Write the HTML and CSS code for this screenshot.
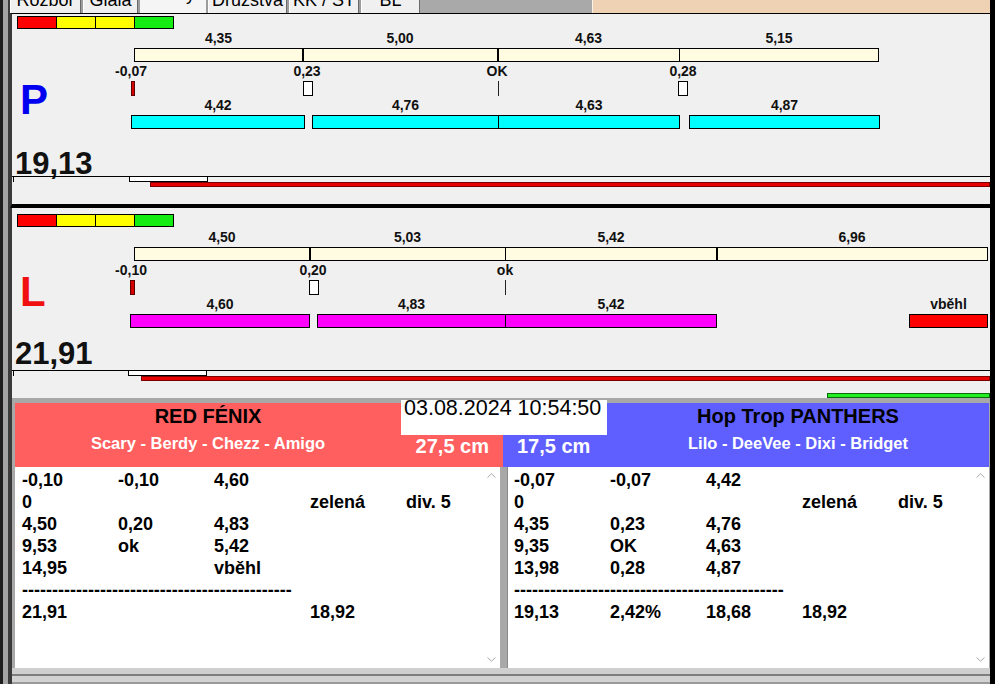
FILE: index.html
```html
<!DOCTYPE html>
<html lang="cs">
<head>
<meta charset="utf-8">
<title>Grafy</title>
<link rel="stylesheet" href="styles.css">
</head>
<body>
<div class="strip"></div>
<div class="main">
  <div class="tabs">
    <div class="tab t1"><span>Rozbor</span></div>
    <div class="tab t2"><span>Glala</span></div>
    <div class="tab t3 sel"><span>Grafy</span></div>
    <div class="tab t4"><span>Družstva</span></div>
    <div class="tab t5"><span>KK / ST</span></div>
    <div class="tab t6"><span>BL</span></div>
    <div class="tabs-fill"></div>
    <div class="tabs-peach"></div>
  </div>

  <div class="chart p">
    <div class="colorbar"><i class="cb r"></i><i class="cb y"></i><i class="cb y"></i><i class="cb g"></i></div>
    <div class="body">
      <div class="side"><div class="letter">P</div></div>
      <div class="plot">
        <div class="prow lr">
          <span class="lab" style="left:21px;width:169px">4,35</span>
          <span class="lab" style="left:189px;width:196px">5,00</span>
          <span class="lab" style="left:384px;width:183px">4,63</span>
          <span class="lab" style="left:566px;width:200px">5,15</span>
        </div>
        <div class="prow br">
          <span class="seg cream" style="left:21px;width:169px"></span>
          <span class="seg cream thick" style="left:189px;width:196px"></span>
          <span class="seg cream thick" style="left:384px;width:183px"></span>
          <span class="seg cream" style="left:566px;width:200px"></span>
        </div>
        <div class="prow lr">
          <span class="lab c" style="left:18px">-0,07</span>
          <span class="lab c" style="left:194px">0,23</span>
          <span class="lab c" style="left:384px">OK</span>
          <span class="lab c" style="left:570px">0,28</span>
        </div>
        <div class="prow mr">
          <span class="mk mred" style="left:18px;width:4px"></span>
          <span class="mk mbox" style="left:190px;width:10px"></span>
          <span class="mk mline" style="left:385px;width:1px"></span>
          <span class="mk mbox" style="left:565px;width:10px"></span>
        </div>
        <div class="prow lr">
          <span class="lab" style="left:18px;width:174px">4,42</span>
          <span class="lab" style="left:199px;width:187px">4,76</span>
          <span class="lab" style="left:385px;width:182px">4,63</span>
          <span class="lab" style="left:576px;width:191px">4,87</span>
        </div>
        <div class="prow br">
          <span class="seg cyan" style="left:18px;width:174px"></span>
          <span class="seg cyan" style="left:199px;width:187px"></span>
          <span class="seg cyan" style="left:385px;width:182px"></span>
          <span class="seg cyan" style="left:576px;width:191px"></span>
        </div>
      </div>
    </div>
    <div class="total">19,13</div>
    <div class="axis">
      <span class="tick"></span>
      <div class="abox" style="margin-left:117px"></div>
      <div class="abar" style="margin-left:138px"></div>
    </div>
  </div>

  <div class="chart l">
    <div class="colorbar"><i class="cb r"></i><i class="cb y"></i><i class="cb y"></i><i class="cb g"></i></div>
    <div class="body">
      <div class="side"><div class="letter">L</div></div>
      <div class="plot">
        <div class="prow lr">
          <span class="lab" style="left:21px;width:176px">4,50</span>
          <span class="lab" style="left:196px;width:197px">5,03</span>
          <span class="lab" style="left:392px;width:212px">5,42</span>
          <span class="lab" style="left:603px;width:272px">6,96</span>
        </div>
        <div class="prow br">
          <span class="seg cream" style="left:21px;width:176px"></span>
          <span class="seg cream thick" style="left:196px;width:197px"></span>
          <span class="seg cream" style="left:392px;width:212px"></span>
          <span class="seg cream thick" style="left:603px;width:272px"></span>
        </div>
        <div class="prow lr">
          <span class="lab c" style="left:18px">-0,10</span>
          <span class="lab c" style="left:200px">0,20</span>
          <span class="lab c" style="left:392px">ok</span>
        </div>
        <div class="prow mr">
          <span class="mk mred" style="left:17px;width:5px"></span>
          <span class="mk mbox" style="left:196px;width:10px"></span>
          <span class="mk mline" style="left:392px;width:1px"></span>
        </div>
        <div class="prow lr">
          <span class="lab" style="left:17px;width:180px">4,60</span>
          <span class="lab" style="left:204px;width:189px">4,83</span>
          <span class="lab" style="left:392px;width:212px">5,42</span>
          <span class="lab" style="left:796px;width:79px">vběhl</span>
        </div>
        <div class="prow br">
          <span class="seg mag" style="left:17px;width:180px"></span>
          <span class="seg mag" style="left:204px;width:189px"></span>
          <span class="seg mag" style="left:392px;width:212px"></span>
          <span class="seg red" style="left:796px;width:79px"></span>
        </div>
      </div>
    </div>
    <div class="total">21,91</div>
    <div class="axis">
      <span class="tick"></span>
      <div class="abox" style="margin-left:116px"></div>
      <div class="abar" style="margin-left:129px"></div>
      <div class="agreen" style="margin-left:815px"></div>
    </div>
  </div>

  <div class="bottom">
    <div class="teams">
      <div class="team a">
        <div class="hdr">
          <div class="hdr-main">
            <div class="title">RED FÉNIX</div>
            <div class="names">Scary - Berdy - Chezz - Amigo</div>
          </div>
          <div class="hdr-side">27,5 cm</div>
        </div>
        <div class="tbox">
          <div class="txt">
            <span>-0,10</span><span>-0,10</span><span>4,60</span><span></span><span></span>
            <span>0</span><span></span><span></span><span>zelená</span><span>div. 5</span>
            <span>4,50</span><span>0,20</span><span>4,83</span><span></span><span></span>
            <span>9,53</span><span>ok</span><span>5,42</span><span></span><span></span>
            <span>14,95</span><span></span><span>vběhl</span><span></span><span></span>
            <span class="dash">---------------------------------------------</span>
            <span>21,91</span><span></span><span></span><span>18,92</span><span></span>
          </div>
          <div class="scroll">
            <svg width="9" height="5" viewBox="0 0 9 5"><path d="M0.5 4.5 L4.5 0.8 L8.5 4.5" fill="none" stroke="#a8a8a8" stroke-width="1"/></svg>
            <svg width="9" height="5" viewBox="0 0 9 5"><path d="M0.5 0.5 L4.5 4.2 L8.5 0.5" fill="none" stroke="#a8a8a8" stroke-width="1"/></svg>
          </div>
        </div>
      </div>
      <div class="team b">
        <div class="hdr">
          <div class="hdr-side">17,5 cm</div>
          <div class="hdr-main">
            <div class="title">Hop Trop PANTHERS</div>
            <div class="names">Lilo - DeeVee - Dixi - Bridget</div>
          </div>
        </div>
        <div class="tbox">
          <div class="txt">
            <span>-0,07</span><span>-0,07</span><span>4,42</span><span></span><span></span>
            <span>0</span><span></span><span></span><span>zelená</span><span>div. 5</span>
            <span>4,35</span><span>0,23</span><span>4,76</span><span></span><span></span>
            <span>9,35</span><span>OK</span><span>4,63</span><span></span><span></span>
            <span>13,98</span><span>0,28</span><span>4,87</span><span></span><span></span>
            <span class="dash">---------------------------------------------</span>
            <span>19,13</span><span>2,42%</span><span>18,68</span><span>18,92</span><span></span>
          </div>
          <div class="scroll">
            <svg width="9" height="5" viewBox="0 0 9 5"><path d="M0.5 4.5 L4.5 0.8 L8.5 4.5" fill="none" stroke="#a8a8a8" stroke-width="1"/></svg>
            <svg width="9" height="5" viewBox="0 0 9 5"><path d="M0.5 0.5 L4.5 4.2 L8.5 0.5" fill="none" stroke="#a8a8a8" stroke-width="1"/></svg>
          </div>
        </div>
      </div>
    </div>
    <div class="foot"></div>
    <div class="date">03.08.2024 10:54:50</div>
  </div>
</div>
<div class="edge"></div>
</body>
</html>
```

FILE: styles.css
```css
* { box-sizing: border-box; margin: 0; padding: 0; }

body {
  width: 995px;
  height: 684px;
  overflow: hidden;
  display: flex;
  background: #f0f0f0;
  font-family: "Liberation Sans", Arial, sans-serif;
  color: #000;
}

.strip {
  width: 10px;
  background: linear-gradient(90deg, #1e1e1e 0 3px, #a4a4a4 3px 8px, #3c3c3c 8px 10px);
}

.main {
  width: 980px;
  display: flex;
  flex-direction: column;
}

.edge {
  width: 5px;
  background: #000;
}

/* tabs */
.tabs {
  height: 13px;
  display: flex;
  background: #9c9c9c;
}

.tab {
  height: 13px;
  overflow: hidden;
  margin-right: 2px;
  background: #f0f0f0;
  border-left: 1px solid #fff;
  border-right: 1px solid #6a6a6a;
  font-size: 18px;
  line-height: 18px;
  text-align: center;
  white-space: nowrap;
}

.tab span { display: block; margin-top: -9px; }
.tab.sel { background: #f5f5f5; border-color: #f5f5f5; }
.tab.sel span { margin-top: -15px; }

.t1 { width: 71px; }
.t2 { width: 55px; }
.t3 { width: 66px; }
.t4 { width: 79px; }
.t5 { width: 70px; }
.t6 { width: 59px; margin-right: 0; }

.tabs-fill { width: 172px; background: #a9a9a9; }
.tabs-peach { flex: 1; background: #efd2b4; border-left: 1px solid #fbf3ea; }

/* charts */
.chart {
  height: 190px;
  background: #f0f0f0;
  border-left: 2px solid #3a3a3a;
  display: flex;
  flex-direction: column;
}

.chart.p {
  height: 195px;
  border-top: 1px solid #000;
  border-bottom: 4px solid #000;
}

.colorbar {
  display: flex;
  gap: 1px;
  width: max-content;
  margin-left: 5px;
  background: #000;
  border: 1px solid #000;
}

.p .colorbar { margin-top: 2px; }
.l .colorbar { margin-top: 6px; }

.cb { display: block; width: 38px; height: 11px; }
.cb.r { background: #ff0000; }
.cb.y { background: #ffff00; }
.cb.g { background: #14ec14; }

.body { display: flex; height: 100px; }
.l .body { margin-top: 1px; }

.side { width: 101px; padding-left: 8px; }

.letter {
  font-size: 42px;
  font-weight: bold;
  line-height: 42px;
}

.p .letter { margin-top: 50px; color: #0000f0; }
.l .letter { margin-top: 43px; color: #f01010; }

.plot { flex: 1; }

.prow { position: relative; }
.prow.lr { height: 14px; margin-top: 2px; }
.prow.br { height: 14px; margin-top: 3px; }
.prow.mr { height: 15px; margin-top: 3px; }

.lab {
  position: absolute;
  top: 0;
  font-size: 14px;
  font-weight: bold;
  line-height: 14px;
  text-align: center;
  white-space: nowrap;
  color: #111;
}

.lab.c { transform: translateX(-50%); }

.seg {
  position: absolute;
  top: 0;
  height: 14px;
  border: 1px solid #000;
}

.seg.cream { background: #fffce2; }
.seg.thick { border-left-width: 2px; }
.seg.cyan { background: #00ffff; }
.seg.mag { background: #ff00ff; }
.seg.red { background: #ff0000; }

.mk { position: absolute; top: 0; height: 15px; }
.mk.mred { background: #d40000; border: 1px solid #5a0000; }
.mk.mbox { background: #fff; border: 1px solid #000; }
.mk.mline { background: #222; }

.total {
  height: 24px;
  padding-left: 3px;
  font-size: 31px;
  font-weight: bold;
  line-height: 24px;
  color: #111;
}

.p .total { margin-top: 23px; }
.l .total { margin-top: 14px; margin-bottom: 4px; }

.axis {
  flex: 1;
  position: relative;
  border-top: 1px solid #000;
}

.tick {
  position: absolute;
  left: 1px;
  top: 0;
  width: 1px;
  height: 5px;
  background: #000;
}

.abox {
  width: 79px;
  height: 5px;
  background: #fff;
  border: 1px solid #000;
  border-top: none;
}

.abar {
  height: 5px;
  background: #e60000;
  border: 1px solid #7a0000;
}

.agreen {
  margin-top: 12px;
  height: 5px;
  background: #22ee22;
  border: 1px solid #0b6a0b;
}

/* bottom section */
.bottom {
  position: relative;
  height: 286px;
  background: #a8a8a8;
  border-left: 2px solid #3a3a3a;
  padding: 5px 1px 0 3px;
  display: flex;
  flex-direction: column;
}

.teams { display: flex; height: 265px; }

.team { display: flex; flex-direction: column; }
.team.a { width: 488px; }
.team.b { width: 486px; }

.hdr { height: 64px; display: flex; }
.team.a .hdr { background: #ff5f5f; }
.team.b .hdr { background: #5f5fff; }

.hdr-main {
  display: flex;
  flex-direction: column;
  align-items: center;
  padding-top: 1px;
}

.team.a .hdr-main { width: 386px; }
.team.b .hdr-main { flex: 1; }

.title {
  font-size: 20px;
  font-weight: bold;
  line-height: 24px;
  color: #000;
  white-space: nowrap;
}

.names {
  margin-top: 5px;
  font-size: 16.5px;
  font-weight: bold;
  line-height: 20px;
  color: #fff;
  white-space: nowrap;
}

.hdr-side {
  padding-top: 31px;
  font-size: 20px;
  font-weight: bold;
  line-height: 24px;
  color: #fff;
  white-space: nowrap;
}

.team.a .hdr-side { flex: 1; text-align: right; padding-right: 14px; }
.team.b .hdr-side { width: 104px; padding-left: 14px; }

.tbox {
  height: 201px;
  background: #fff;
  display: flex;
}

.team.a .tbox { margin-right: 3px; }
.team.b .tbox { margin-left: 4px; border-left: 1px solid #8a8a8a; }

.txt {
  flex: 1;
  min-width: 0;
  padding: 2px 0 0 7px;
  display: grid;
  grid-template-columns: repeat(4, 96px) auto;
  grid-auto-rows: 22px;
  align-content: start;
  font-size: 18px;
  font-weight: bold;
  line-height: 22px;
  color: #000;
  white-space: nowrap;
}

.team.b .txt { padding-left: 6px; }

.txt .dash { grid-column: 1 / -1; }

.scroll {
  flex: none;
  width: 18px;
  display: flex;
  flex-direction: column;
  justify-content: space-between;
  align-items: center;
  padding: 6px 0 6px;
}

.scroll svg { display: block; }

.foot {
  flex: 1;
  margin: 0 -1px 0 -3px;
  background: linear-gradient(#cfcfcf 0 6px, #7e7e7e 6px 8px, #d2d2d2 8px 14px, #9a9a9a 14px);
}

.date {
  position: absolute;
  left: 389px;
  top: 2px;
  width: 206px;
  height: 35px;
  padding-left: 3px;
  background: #fff;
  font-size: 21.5px;
  line-height: 17px;
  color: #000;
  white-space: nowrap;
}
```
